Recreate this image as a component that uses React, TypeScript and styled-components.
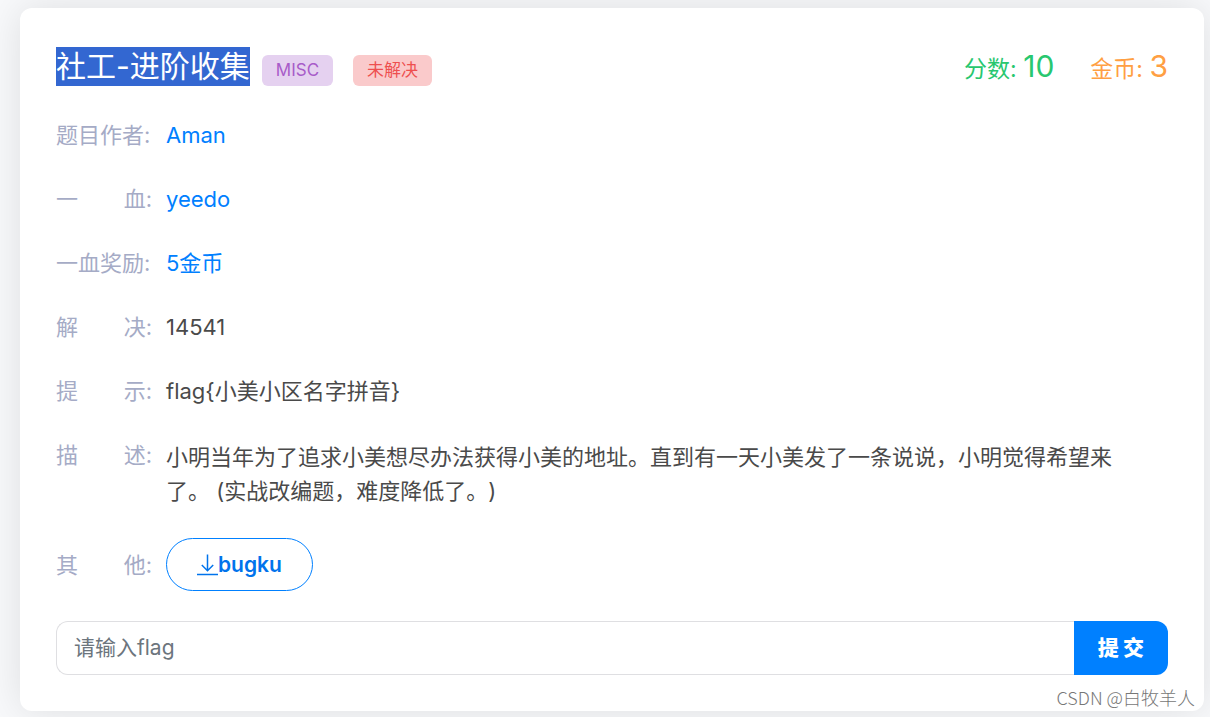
import React from "react";
import styled, { createGlobalStyle } from "styled-components";

const GlobalStyle = createGlobalStyle`
  *, *::before, *::after { box-sizing: border-box; }
  body {
    margin: 0;
    background: #f8f9fb;
    color: #4a4a4a;
    font-family: Inter, "Noto Sans CJK SC", sans-serif;
    font-size: 22px;
    line-height: 34px;
    text-spacing-trim: space-all;
  }
  a { color: #0080ff; text-decoration: none; }
`;

const Page = styled.main`
  position: relative;
  padding: 8px 6px 6px 20px;
`;

const Card = styled.article`
  padding: 36px;
  background: #fff;
  border-radius: 12px;
  box-shadow: 0 0 40px rgba(0, 0, 0, 0.11);
`;

const Header = styled.header`
  display: flex;
  align-items: center;
  justify-content: space-between;
  min-height: 45px;
  margin-bottom: 29px;
`;

const TitleGroup = styled.div`
  display: flex;
  align-items: flex-end;
`;

const Title = styled.h1`
  margin: 0 12px 0 0;
  background: #3367d1;
  color: #fff;
  font-size: 30px;
  font-weight: 400;
  line-height: 39px;
`;

const Badge = styled.span<{ $tone: "purple" | "red" }>`
  margin-right: 20px;
  padding: 0 14px;
  border-radius: 6px;
  background: ${(p) => (p.$tone === "purple" ? "#e5d1f0" : "#facacb")};
  color: ${(p) => (p.$tone === "purple" ? "#a85cc9" : "#ee4f4f")};
  font-size: 17px;
  line-height: 31px;
`;

const Scores = styled.div`
  display: flex;
  align-items: baseline;
  gap: 36px;
  padding-top: 2px;
  font-size: 23px;
`;

const Score = styled.span<{ $color: string }>`
  color: ${(p) => p.$color};
`;

const ScoreValue = styled.span`
  font-size: 30px;
`;

const Details = styled.dl`
  display: flex;
  flex-direction: column;
  gap: 30px;
  margin: 0 0 30px;
`;

const Row = styled.div<{ $center?: boolean }>`
  display: flex;
  align-items: ${(p) => (p.$center ? "center" : "flex-start")};
  gap: 14px;
`;

const Label = styled.dt`
  display: flex;
  flex: 0 0 96px;
  justify-content: space-between;
  color: #a5abc6;
  white-space: nowrap;
`;

const Value = styled.dd`
  margin: 0;
`;

const Description = styled.p`
  margin: 2px 0 0;
  padding-right: 36px;
`;

const DownloadLink = styled.a`
  display: flex;
  align-items: center;
  height: 53px;
  padding: 0 30px;
  border: 1px solid #0080ff;
  border-radius: 27px;
  color: #0073ec;
  font-size: 21px;
  font-weight: 600;
`;

const FlagForm = styled.form`
  display: flex;
  height: 54px;
`;

const FlagInput = styled.input`
  flex: 1;
  min-width: 0;
  padding: 0 17px;
  border: 1px solid #dfdfe2;
  border-right: 0;
  border-radius: 12px 0 0 12px;
  background: #fff;
  font: inherit;
  font-size: 21px;
  &::placeholder { color: #6c757d; opacity: 1; }
`;

const SubmitButton = styled.button`
  padding: 0 24px;
  border: 0;
  border-radius: 0 12px 12px 0;
  background: #0080ff;
  color: #fff;
  font: inherit;
  font-size: 21px;
  font-weight: 900;
`;

const Watermark = styled.span`
  position: absolute;
  right: 15px;
  bottom: 8px;
  color: #777;
  font-family: "Noto Sans CJK SC", sans-serif;
  font-size: 18px;
  font-weight: 300;
  line-height: 24px;
`;

const DownloadIcon = () => (
  <svg width="21" height="24" viewBox="0 0 21 24" fill="none" stroke="currentColor" strokeWidth="1.5" aria-hidden="true">
    <path d="M10.5 1.5v16M4.8 12l5.7 5.7 5.7-5.7M0 21.5h21" />
  </svg>
);

/* Two-character labels spread out to the width of the four-character ones. */
const FieldLabel = ({ parts }: { parts: string[] }) => (
  <Label>
    {parts.map((part) => (
      <span key={part}>{part}</span>
    ))}
  </Label>
);

export default function App() {
  return (
    <>
      <GlobalStyle />
      <Page>
        <Card>
          <Header>
            <TitleGroup>
              <Title>社工-进阶收集</Title>
              <Badge $tone="purple">MISC</Badge>
              <Badge $tone="red">未解决</Badge>
            </TitleGroup>
            <Scores>
              <Score $color="#28c76f">
                分数: <ScoreValue>10</ScoreValue>
              </Score>
              <Score $color="#ff9f43">
                金币: <ScoreValue>3</ScoreValue>
              </Score>
            </Scores>
          </Header>
          <Details>
            <Row>
              <FieldLabel parts={["题目作者:"]} />
              <Value><a href="#author">Aman</a></Value>
            </Row>
            <Row>
              <FieldLabel parts={["一", "血:"]} />
              <Value><a href="#first-blood">yeedo</a></Value>
            </Row>
            <Row>
              <FieldLabel parts={["一血奖励:"]} />
              <Value><a href="#reward">5金币</a></Value>
            </Row>
            <Row>
              <FieldLabel parts={["解", "决:"]} />
              <Value>14541</Value>
            </Row>
            <Row>
              <FieldLabel parts={["提", "示:"]} />
              <Value>{"flag{小美小区名字拼音}"}</Value>
            </Row>
            <Row>
              <FieldLabel parts={["描", "述:"]} />
              <Value>
                <Description>
                  小明当年为了追求小美想尽办法获得小美的地址。直到有一天小美发了一条说说，小明觉得希望来了。 (实战改编题，难度降低了。)
                </Description>
              </Value>
            </Row>
            <Row $center>
              <FieldLabel parts={["其", "他:"]} />
              <Value>
                <DownloadLink href="#download"><DownloadIcon />bugku</DownloadLink>
              </Value>
            </Row>
          </Details>
          <FlagForm onSubmit={(e) => e.preventDefault()}>
            <FlagInput type="text" aria-label="请输入flag" placeholder="请输入flag" />
            <SubmitButton type="submit">提 交</SubmitButton>
          </FlagForm>
        </Card>
        <Watermark>CSDN @白牧羊人</Watermark>
      </Page>
    </>
  );
}
